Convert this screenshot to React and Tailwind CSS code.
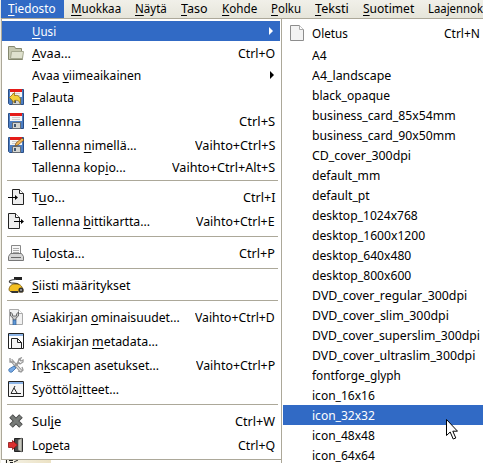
import React, { useLayoutEffect, useRef, useState } from "react";

// Text fitted to a known width; u is the index of the underlined mnemonic.
function Label({ text, w, u = -1, className = "" }) {
  const ref = useRef(null);
  const [scale, setScale] = useState(1);
  useLayoutEffect(() => {
    const fit = () => ref.current && setScale(w / ref.current.offsetWidth);
    fit();
    document.fonts?.ready.then(fit);
  }, [w]);
  return (
    <span className={"block h-5 " + className} style={{ width: w }}>
      <span ref={ref} className="inline-block origin-left whitespace-pre leading-5" style={{ transform: `scaleX(${scale})` }}>
        {u < 0 ? text : (
          <>
            {text.slice(0, u)}
            <span className="underline decoration-1 underline-offset-2 [text-decoration-skip-ink:none]">{text[u]}</span>
            {text.slice(u + 1)}
          </>
        )}
      </span>
    </span>
  );
}

const Floppy = () => (
  <>
    <path d="M.5.5h15v15h-14l-1-1z" fill="#4d7fc4" stroke="#2b4f86" />
    <path d="M2 1h12v7H2z" fill="#f5f5f5" />
    <path d="M2 0h12v3H2z" fill="#e51b18" />
    <path d="M4 4.500h8M4 6.500h8" stroke="#ccc" />
    <path d="M4.500 9.500h8v6h-8z" fill="#d5d6d2" stroke="#656b73" />
    <path d="M6 11h2v3H6z" fill="#415671" />
  </>
);

const icons = {
  open: (
    <>
      <path d="M.5 1.500h6l1 2h6v3h1v8H.5z" fill="#c6c8b0" stroke="#85886f" />
      <path d="M3.500 6.500h12l-1 7h-12z" fill="#dfe1ce" stroke="#a5a890" />
    </>
  ),
  revert: (
    <>
      <Floppy />
      <path d="M1.500 8.500l5-5v3c5-1 7 3 5.500 8-1-3-2-3.500-5.500-3v2.500z" fill="#f4cf3b" stroke="#8f6811" strokeWidth=".8" />
    </>
  ),
  save: <Floppy />,
  saveAs: (
    <>
      <Floppy />
      <path d="M7 9l1-3 6-5 2 2-6 5z" fill="#f0b553" stroke="#704719" strokeWidth=".7" />
    </>
  ),
  import: (
    <>
      <path d="M4.500.5h7l4 4v11h-11z" fill="#eee" stroke="#222" />
      <path d="M11.500.5v4h4" fill="#fff" stroke="#222" />
      <path d="M0 8.500h8" stroke="#000" />
      <path d="M7 6l3 2.500L7 11z" />
    </>
  ),
  export: (
    <>
      <path d="M.5.5h7l4 4v11H.5z" fill="#eee" stroke="#222" />
      <path d="M7.500.5v4h4" fill="#fff" stroke="#222" />
      <path d="M6 8.500h7" stroke="#000" />
      <path d="M13 6l3 2.500-3 2.500z" />
    </>
  ),
  print: (
    <>
      <path d="M3.500.5h9v9h-9z" fill="#f7f7f7" stroke="#888" />
      <path d="M5 3.500h6M5 5.500h6M5 7.500h6" stroke="#aaa" />
      <path d="M2.500 8.500h11l2 3v4H.5v-4z" fill="#d5d5d5" stroke="#777" />
      <path d="M3 12.500h10" stroke="#666" />
    </>
  ),
  vacuum: (
    <>
      <path d="M6 0h8v3H6z" fill="#222" />
      <path d="M8 2.500C3 2.500 0 4 2 5.500s7-.5 9 2.500" fill="none" stroke="#444" strokeWidth="1.200" />
      <path d="M1 12c1-4 3-5 7-5 5 0 7 3 7 8H5c-3 0-4-1-4-3z" fill="#f4bf20" stroke="#735407" strokeWidth=".8" />
      <path d="M2 14h8v2H4z" fill="#333" />
      <circle cx="13" cy="13" r="2.600" fill="#333" />
      <circle cx="13" cy="13" r="1" fill="#aaa" />
    </>
  ),
  docProps: (
    <>
      <path d="M1.500.5h9l4 4v11h-13z" fill="#f1f1f1" stroke="#aaa" />
      <path d="M10.500.5v4h4" fill="#fff" stroke="#aaa" />
      <path d="M2.500 3v4l2.500 2v2h3V9l2.500-2V3L8.500 5v2h-4V5z" fill="#ccc" stroke="#555" strokeWidth=".8" />
      <path d="M5 11h3v5H5z" fill="#5c96d5" stroke="#305d94" strokeWidth=".7" />
    </>
  ),
  metadata: (
    <>
      <path d="M.5.5h15v15H.5z" fill="#fff" stroke="#222" />
      <path d="M1 1h14v2H1z" fill="#8db5e7" />
      <path d="M3.500 5.500h6l4 4v6h-10z" fill="#f4f4f4" stroke="#222" />
      <path d="M9.500 5.500v4h4" fill="none" stroke="#222" />
    </>
  ),
  prefs: (
    <>
      <path d="M3 3l10 11" stroke="#888" strokeWidth="3" />
      <path d="M3 3l10 11" stroke="#ddd" strokeWidth="1.500" />
      <path d="M2 1v4h4M14 10l1 3-2 2-3-1M10 5l2 2 3-2V3l-2 1-1-1 1-2-2 1z" fill="none" stroke="#999" strokeWidth="1.300" />
      <path d="M11 5l-5 5" stroke="#999" strokeWidth="2.300" />
      <path d="M6 9l2 2-4 4c-2 1-4-1-3-3z" fill="#76a9e5" stroke="#376da9" strokeWidth=".8" />
    </>
  ),
  input: (
    <>
      <path d="M.5.5h15v15H.5z" fill="#f5f5f5" stroke="#222" />
      <path d="M1 1h14v2H1z" fill="#8db5e7" />
      <path d="M7 5L3 12.500h10M6 7l3 5" fill="none" stroke="#222" />
    </>
  ),
  close: (
    <>
      <path d="M3 3l10 10M13 3L3 13" stroke="#444" strokeWidth="5" />
      <path d="M3.400 3.400l9.200 9.200M12.600 3.400l-9.200 9.200" stroke="#777b78" strokeWidth="3.400" />
    </>
  ),
  quit: (
    <>
      <path d="M6.500 1.500h8v13h-8z" fill="#444" stroke="#222" />
      <path d="M10 3l4-2v14l-4-2z" fill="#c6c7bd" stroke="#555" strokeWidth=".6" />
      <path d="M.5 5.500h4v-2l5 4.500-5 4.500v-2h-4z" fill="#dc3030" stroke="#8a1111" strokeWidth=".8" />
    </>
  ),
  page: (
    <>
      <path d="M1.500.5h9l4 4v11h-13z" fill="#f3f3f3" stroke="#8d8d8d" />
      <path d="M10.500.5v4h4" fill="#fff" stroke="#aaa" />
    </>
  ),
};

const Icon = ({ name }) => (
  <svg viewBox="0 0 16 16" className="block size-4">{icons[name]}</svg>
);

const menus = [
  ["Tiedosto", 48, 0, "pl-[7px] pr-2 bg-[#316ac5] text-white"],
  ["Muokkaa", 50, 0, "ml-[7px]"],
  ["Näytä", 32, 0, "ml-[14px]"],
  ["Taso", 27, 0, "ml-[14px]"],
  ["Kohde", 35, 0, "ml-[14px]"],
  ["Polku", 30, 0, "ml-[14px]"],
  ["Teksti", 34, 0, "ml-[14px]"],
  ["Suotimet", 51, 0, "ml-[14px]"],
  ["Laajennok", 55, -1, "ml-[14px]"],
];

// [icon, label, width, mnemonic index, shortcut, shortcut width]; null is a separator.
const items = [
  ["open", "Avaa...", 39, 0, "Ctrl+O", 37],
  ["", "Avaa viimeaikainen", 109, 5, ">", 0],
  ["revert", "Palauta", 42, 0],
  ["save", "Tallenna", 49, 0, "Ctrl+S", 36],
  ["saveAs", "Tallenna nimellä...", 105, 9, "Vaihto+Ctrl+S", 80],
  ["", "Tallenna kopio...", 94, 12, "Vaihto+Ctrl+Alt+S", 103],
  null,
  ["import", "Tuo...", 33, 1, "Ctrl+I", 32],
  ["export", "Tallenna bittikartta...", 118, 9, "Vaihto+Ctrl+E", 79],
  null,
  ["print", "Tulosta...", 53, 2, "Ctrl+P", 36],
  null,
  ["vacuum", "Siisti määritykset", 98, 0],
  null,
  ["docProps", "Asiakirjan ominaisuudet...", 148, 11, "Vaihto+Ctrl+D", 80],
  ["metadata", "Asiakirjan metadata...", 126, 11],
  ["prefs", "Inkscapen asetukset...", 127, 2, "Vaihto+Ctrl+P", 79],
  ["input", "Syöttölaitteet...", 87, 8],
  null,
  ["close", "Sulje", 29, 3, "Ctrl+W", 40],
  ["quit", "Lopeta", 38, 2, "Ctrl+Q", 37],
];

const templates = [
  ["A4", 15], ["A4_landscape", 79], ["black_opaque", 78],
  ["business_card_85x54mm", 144], ["business_card_90x50mm", 144],
  ["CD_cover_300dpi", 99], ["default_mm", 68], ["default_pt", 58],
  ["desktop_1024x768", 106], ["desktop_1600x1200", 113],
  ["desktop_640x480", 99], ["desktop_800x600", 99],
  ["DVD_cover_regular_300dpi", 155], ["DVD_cover_slim_300dpi", 137],
  ["DVD_cover_superslim_300dpi", 168], ["DVD_cover_ultraslim_300dpi", 163],
  ["fontforge_glyph", 89], ["icon_16x16", 63], ["icon_32x32", 63],
  ["icon_48x48", 63], ["icon_64x64", 63],
];

const Arrow = () => (
  <svg viewBox="0 0 4 8" className="mr-px block h-2 w-1 fill-current"><path d="M0 0l4 4-4 4z" /></svg>
);

export default function App() {
  return (
    <div className="relative h-[463px] w-[483px] overflow-hidden bg-white font-['Noto_Sans','Open_Sans',sans-serif] text-[13px] text-black">
      <div className="flex h-[18px] items-start overflow-hidden bg-linear-to-b from-[#f1f0e9] to-[#e6e5da]">
        {menus.map(([t, w, u, cls], i) => (
          <div key={t} className={"h-[18px] shrink-0 " + (i === 0 ? "ml-px " : "") + cls}>
            <Label text={t} w={w} u={u} className="-mt-[2px]" />
          </div>
        ))}
      </div>
      <div className="flex h-[445px]">
        <div className="w-px shrink-0 bg-[#f1efe5]" />
        <div className="w-[281px] shrink-0">
          <div className="h-[442px] border border-[#aca899] bg-white py-0.5 pr-px">
            <div className="flex h-5 items-center bg-[#316ac5] pl-[30px] pr-1.5 text-white">
              <Label text="Uusi" w={24} u={0} />
              <span className="ml-auto"><Arrow /></span>
            </div>
            {items.map((it, i) => it === null ? (
              <div key={i} className="flex h-2 pl-[5px] pr-0.5 pt-[3px]"><div className="h-px flex-1 bg-[#aca899]" /></div>
            ) : (
              <div key={i} className={"flex items-center pl-1.5 pr-[5px] " + (it[0] ? "h-6" : "h-5")}>
                <span className="mr-2 size-4 shrink-0">{it[0] && <Icon name={it[0]} />}</span>
                <Label text={it[1]} w={it[2]} u={it[3]} />
                <span className="ml-auto">
                  {it[4] === ">" ? <Arrow /> : it[4] && <Label text={it[4]} w={it[5]} />}
                </span>
              </div>
            ))}
          </div>
          {/* Sliver of the toolbox behind the menu */}
          <div className="ml-1 flex h-[3px] w-[46px] bg-linear-to-r from-[#f3f1e6] to-[#ece2c4]">
            <svg viewBox="0 0 16 3" className="block h-[3px] w-4" fill="none" stroke="#222">
              <path d="M1.500 0v3M4 .5h4M5 2.500h3M9 2l4-2" />
            </svg>
          </div>
        </div>
        <div className="-ml-px h-[445px] flex-1 overflow-hidden border-l border-t border-[#aca899] bg-white pl-px pt-0.5">
          <div className="flex h-6 items-center pl-1.5 pr-[3px]">
            <span className="mr-[7px]"><Icon name="page" /></span>
            <Label text="Oletus" w={36} />
            <Label text="Ctrl+N" w={36} className="ml-auto" />
          </div>
          {templates.map(([t, w]) => (
            <div key={t} className={"h-5 pl-[29px] " + (t === "icon_32x32" ? "bg-[#316ac5] text-white" : "")}>
              <Label text={t} w={w} />
            </div>
          ))}
        </div>
      </div>
      <svg viewBox="0 0 12 21" className="absolute left-[446px] top-[419px] h-[21px] w-3">
        <path d="M.5.5v16l3.700-3.500 3 7 2.600-1-3-6.800h4.700z" fill="#fff" stroke="#000" />
      </svg>
    </div>
  );
}
